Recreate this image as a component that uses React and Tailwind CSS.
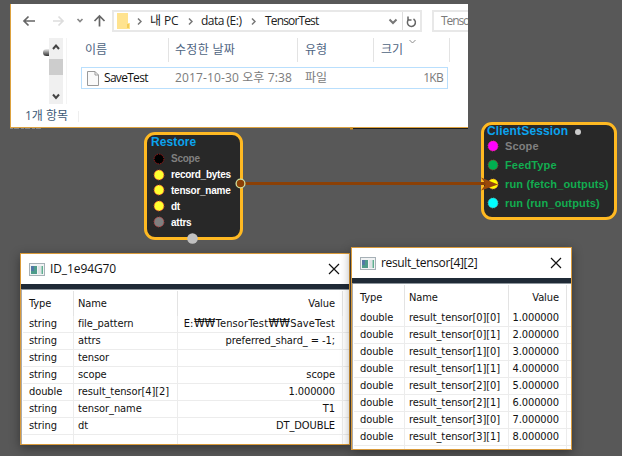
const UI = 'font-["Open_Sans","Noto_Sans_CJK_KR",sans-serif]';

function Explorer() {
  return (
    <section className={`absolute left-[10px] top-[4px] w-[458px] h-[124px] overflow-hidden bg-white border-l border-b border-[#dda23f] text-[12px] text-[#222] ${UI}`}>
      <div className="flex h-[28px] items-end">
        <div className="flex h-[22px] w-[101px] shrink-0 items-center">
          <svg className="h-[22px] w-[101px]" fill="none" strokeWidth="1.7">
            <path d="M24 11H13M17.5 6.5L13 11L17.5 15.5" stroke="#666" />
            <path d="M42 11H52M47.5 6.5L52 11L47.5 15.5" stroke="#ddd" />
            <path d="M66.5 9L69 11.5L71.5 9" stroke="#888" />
            <path d="M88.500 16.500V6M83.500 11L88.500 6L93.500 11" stroke="#666" />
          </svg>
        </div>
        <div className="flex h-[22px] w-[310px] shrink-0 items-center whitespace-nowrap border-2 border-[#e8e8e8]">
          <svg className="ml-[3px] h-[16px] w-[13px] shrink-0">
            <path d="M0 0H11V10H13V16H0Z" fill="#ffe38f" />
            <path d="M10 11H12V15H10Z" fill="#f4cd57" />
          </svg>
          <Crumb className="ml-[7px]" />
          <span className="ml-[8px] w-[30px] text-[12px] tracking-[-0.1px]">내 PC</span>
          <Crumb className="ml-[8px]" />
          <span className="ml-[8px] w-[42px] tracking-[-0.5px]">data (E:)</span>
          <Crumb className="ml-[8px]" />
          <span className="ml-[9px] tracking-[-0.85px]">TensorTest</span>
          <svg className="ml-auto mr-[4px] h-[10px] w-[10px]" fill="none">
            <path d="M1.500 3.500L5 7L8.500 3.500" stroke="#777" strokeWidth="2" />
          </svg>
          <div className="flex h-full w-[18px] items-center justify-center border-l border-[#ddd]">
            <svg className="h-[13px] w-[11px]" fill="none" stroke="#666" strokeWidth="1.5">
              <path d="M7.500 4A4 4 0 1 1 3 4.200M2 1.500V5H5.500" />
            </svg>
          </div>
        </div>
        <div className="ml-[10px] flex h-[22px] grow items-center border-y-2 border-l-2 border-[#e8e8e8] pl-[7px] text-[#7b7b7b] tracking-[-1.1px]">Tenso</div>
      </div>

      <div className="mt-[6px] flex h-[66px]">
        <div className="flex w-[38px] shrink-0 justify-end pt-[11px]">
          <span className="h-[7px] w-[6px] rounded-l-sm bg-gradient-to-b from-[#eee] to-[#333]" />
        </div>
        <div className="flex w-[14px] shrink-0 flex-col items-center justify-between bg-[#f0f0f0]">
          <svg className="h-[21px] w-[14px]" fill="none"><path d="M4 11L7 7.500L10 11" stroke="#444" strokeWidth="2" /></svg>
          <div className="mb-auto h-[16px] w-full bg-[#cdcdcd]" />
          <svg className="h-[15px] w-[14px]" fill="none"><path d="M4 5.500L7 9L10 5.500" stroke="#444" strokeWidth="2" /></svg>
        </div>
        <div className="ml-[3px] w-[15px] shrink-0 border-l border-[#f4f4f4]" />
        <div className="w-[370px] shrink-0">
          <div className="flex h-[24px] items-center text-[#4e6482]">
            <div className="flex h-full w-[88px] items-center border-r border-[#e3e3e3] pl-[4px]">이름</div>
            <div className="flex h-full w-[129px] items-center border-r border-[#e3e3e3] pl-[6px] tracking-[0.3px]">수정한 날짜</div>
            <div className="flex h-full w-[76px] items-center border-r border-[#e3e3e3] pl-[7px]">유형</div>
            <div className="flex h-full w-[76px] items-center border-r border-[#e3e3e3] pl-[7px]">
              크기
              <svg className="mb-[18px] ml-[6px] h-[5px] w-[7px]" fill="none"><path d="M.5 1L3.500 4L6.500 1" stroke="#8c8c8c" /></svg>
            </div>
          </div>
          <div className="mt-[5px] flex h-[22px] w-[367px] items-center border border-[#b9dffd] text-[#7b7b7b]">
            <svg className="ml-[5px] h-[15px] w-[12px] shrink-0"><path d="M.5 .5H8L11.500 4V14.500H.5ZM8 .5V4H11.500" fill="#fafafa" stroke="#9a9a9a" /></svg>
            <span className="ml-[5px] w-[71px] text-[#111] tracking-[-0.7px]">SaveTest</span>
            <span className="w-[130px] whitespace-nowrap tracking-[0.13px]">2017-10-30 오후 7:38</span>
            <span>파일</span>
            <span className="ml-auto mr-[4px] tracking-[-0.7px]">1KB</span>
          </div>
        </div>
      </div>
      <div className="mt-[2px] flex h-[20px] items-center pl-[14px] text-[#3c5876]">
        <span className="w-[53px]">1개 항목</span>
        <span className="h-[11px] border-l border-[#eee]" />
      </div>
    </section>
  );
}

function Crumb({ className }) {
  return (
    <svg className={`h-[9px] w-[5px] shrink-0 ${className}`} fill="none">
      <path d="M1 1.500L4 4.500L1 7.500" stroke="#777" strokeWidth="1.5" />
    </svg>
  );
}

function Port({ fill, stroke }) {
  return (
    <svg className="h-[12px] w-[12px] shrink-0">
      <circle cx="6" cy="6" r="4.900" fill={fill} stroke={stroke} strokeWidth="1" strokeDasharray="1.500 1" />
    </svg>
  );
}

const restorePorts = [
  ['Scope', '#000', '#a01818', 'text-[#808080]'],
  ['record_bytes', '#ffff30', '#ff5030', 'text-white'],
  ['tensor_name', '#ffff30', '#ff5030', 'text-white'],
  ['dt', '#ffff30', '#ff5030', 'text-white'],
  ['attrs', '#808080', '#c04040', 'text-white'],
];

const sessionPorts = [
  ['Scope', '#ff00ff', '#ff20a0', 'text-[#808080]'],
  ['FeedType', '#00b050', '#805030', 'text-[#12ad50]'],
  ['run (fetch_outputs)', '#ffff00', '#ff9030', 'text-[#12ad50]'],
  ['run (run_outputs)', '#00ffff', '#50c0c0', 'text-[#12ad50]'],
];

function Graph() {
  return (
    <>
      <section className='absolute left-[144px] top-[132px] h-[108px] w-[99px] rounded-[11px] border-3 border-[#ffb922] bg-[#282828] pl-[4px] font-["Liberation_Sans",Arial,sans-serif] font-bold'>
        <h2 className="-mt-[1px] h-[17px] text-[12px] leading-[17px] tracking-[0.1px] text-[#0ba3ee]">Restore</h2>
        {restorePorts.map(([name, fill, stroke, color]) => (
          <div key={name} className="flex h-[15.800px] items-center gap-[6px] pl-[2px]">
            <Port fill={fill} stroke={stroke} />
            <span className={`text-[10px] tracking-[-0.25px] ${color}`}>{name}</span>
          </div>
        ))}
      </section>
      <section className='absolute left-[481px] top-[122px] h-[98px] w-[136px] rounded-[11px] border-3 border-[#ffb922] bg-[#282828] pl-[3px] font-["Liberation_Sans",Arial,sans-serif] font-bold'>
        <h2 className="-mt-[1px] flex h-[13px] items-center text-[12px] leading-[14px] tracking-[0.15px] text-[#0ba3ee]">
          ClientSession
          <span className="ml-[7px] mt-[3px] h-[6px] w-[6px] rounded-full bg-[#ccc]" />
        </h2>
        {sessionPorts.map(([name, fill, stroke, color]) => (
          <div key={name} className="flex h-[18.800px] items-center gap-[6px]">
            <Port fill={fill} stroke={stroke} />
            <span className={`whitespace-nowrap text-[11px] tracking-[0.15px] ${color}`}>{name}</span>
          </div>
        ))}
      </section>
      <svg className="absolute left-0 top-0 h-[456px] w-[622px]">
        <path d="M240 183.500H486" stroke="#8b4006" strokeWidth="3" />
        <path d="M481 177.500L498 184.500L481 190.500L486 184Z" fill="#9a480b" />
        <circle cx="240.500" cy="183.500" r="4.400" fill="#8b4006" stroke="#d1df9f" strokeWidth="1.300" />
        <circle cx="192.500" cy="238.500" r="5.300" fill="#c0c0c0" />
        <path d="M10 128.500H43" stroke="#888" strokeDasharray="3 1 5 2" />
        <path d="M353 128.500H468" stroke="#1c1c1c" />
        <path d="M350 128.500H353" stroke="#c88b22" strokeWidth="2" />
      </svg>
    </>
  );
}

const Won = () => <span className="inline-block w-[22px] text-center text-[12px] leading-[11px] tracking-[0px]">₩₩</span>;

const variables = [
  ['string', 'file_pattern', <span className="tracking-[0.15px]">E:<Won />TensorTest<Won />SaveTest</span>],
  ['string', 'attrs', 'preferred_shard_ = -1;'],
  ['string', 'tensor', ''],
  ['string', 'scope', 'scope'],
  ['double', 'result_tensor[4][2]', '1.000000'],
  ['string', 'tensor_name', 'T1'],
  ['string', 'dt', 'DT_DOUBLE'],
];

const tensor = Array.from({ length: 8 }, (_, i) => [
  'double', `result_tensor[${Math.floor(i / 2)}][${i % 2}]`, `${i + 1}.000000`,
]);

function TableWindow({ title, rows, place, cols, titleTracking }) {
  return (
    <section className={`absolute flex flex-col overflow-hidden border border-[#d99a3a] bg-white text-[#111] shadow-[0_3px_10px_rgba(0,0,0,0.4)] ${place}`}>
      <header className={`flex h-[30px] shrink-0 items-center pl-[8px] pr-[9px] ${UI}`}>
        <svg className="h-[13px] w-[16px]">
          <rect x=".5" y=".5" width="15" height="12" fill="#f1f3f4" stroke="#a6b0b6" />
          <rect x="2" y="3" width="6" height="8" fill="#4d9b8a" />
          <rect x="2" y="3" width="3" height="5" fill="#5278a5" />
          <rect x="9" y="3" width="3" height="8" fill="#dfe3e5" />
          <rect x="12.500" y="3" width="1.500" height="8" fill="#5fae8f" />
        </svg>
        <h2 className={`ml-[5px] text-[12px] ${titleTracking}`}>{title}</h2>
        <svg className="ml-auto h-[12px] w-[12px]"><path d="M1 1L11 11M11 1L1 11" stroke="#111" strokeWidth="1.200" /></svg>
      </header>
      <div className="h-[6px] shrink-0 border-b border-[#8d959c] bg-[#1f2a36]" />
      <div className='flex min-h-0 grow flex-col border-l border-[#aaa] pl-[1px] font-["DejaVu_Sans_Condensed","DejaVu_Sans",sans-serif] text-[11px] tracking-[-0.08px]'>
        <div className={`mt-[1px] grid h-[25px] shrink-0 items-center ${cols}`}>
          <span className="flex h-full items-center border-r border-[#e3e3e3] pl-[6px] pt-[2px]">Type</span>
          <span className="flex h-full items-center border-r border-[#e3e3e3] pl-[4px] pt-[2px]">Name</span>
          <span className="flex h-full items-center justify-end border-r border-[#e3e3e3] pr-[7px] pt-[2px]">Value</span>
        </div>
        {[...rows, ['', '', '']].map(([type, name, value], i) => (
          <div key={i} className={`grid h-[17px] shrink-0 whitespace-nowrap border-b border-[#ececec] leading-[16px] ${cols}`}>
            <span className="border-r border-[#ececec] pl-[6px]">{type}</span>
            <span className="border-r border-[#ececec] pl-[4px]">{name}</span>
            <span className="border-r border-[#ececec] pr-[7px] text-right">{value}</span>
          </div>
        ))}
      </div>
    </section>
  );
}

export default function App() {
  return (
    <main className="relative h-[456px] w-[622px] overflow-hidden bg-[#585858]">
      <Explorer />
      <Graph />
      <TableWindow title="ID_1e94G70" titleTracking="tracking-[-0.1px]" rows={variables} place="left-[20px] top-[253px] h-[192px] w-[330px]" cols="grid-cols-[51px_104px_165px]" />
      <TableWindow title="result_tensor[4][2]" titleTracking="tracking-[-0.35px]" rows={tensor} place="left-[351px] top-[247px] h-[203px] w-[221px]" cols="grid-cols-[51px_104px_58px]" />
    </main>
  );
}
